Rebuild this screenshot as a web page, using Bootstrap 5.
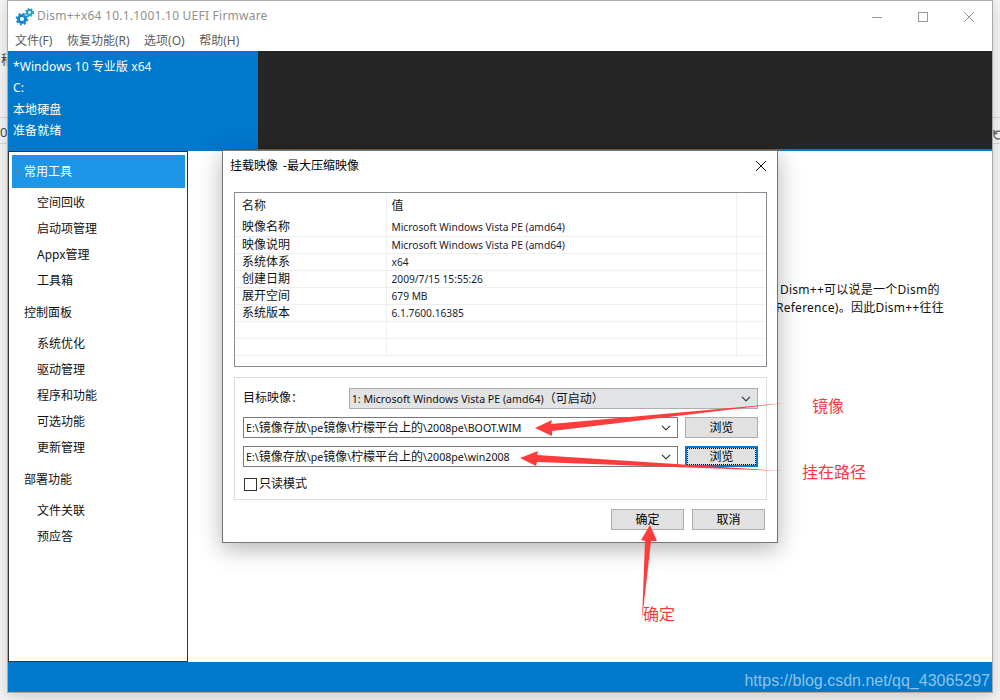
<!DOCTYPE html>
<html lang="zh-CN">
<head>
  <meta charset="UTF-8">
  <title>Dism++x64</title>
  <link href="https://cdn.jsdelivr.net/npm/bootstrap@5.3.0/dist/css/bootstrap.min.css" rel="stylesheet">
  <style>
    body { background: #f4f4f4; font: 12px/1.2 "Noto Sans", "Noto Sans CJK SC", sans-serif; color: #111; overflow: hidden; height: 700px; position: relative; }
    /* bits of the page behind the window */
    .back-rule { position: absolute; height: 1px; background: #d8d8d8; width: 1000px; left: 0; }
    .back-char { position: absolute; font-size: 13px; color: #444; width: 7px; overflow: hidden; white-space: nowrap; }
    .back-icon { position: absolute; left: 993px; top: 129px; }
    .app-win { position: absolute; left: 8px; top: 1px; width: 984px; height: 691px; background: #fff; box-shadow: 0 0 0 1px #ababab, 0 4px 14px rgba(0,0,0,.18); }
    .win-title { height: 31px; padding-left: 7px; color: #8f8f8f; letter-spacing: .23px; }
    .win-btn { width: 46px; }
    .win-menu { height: 19px; padding-left: 7px; color: #5c5c5c; gap: 14.5px; }
    .head-band { height: 98px; background: #262626; }
    .head-info { width: 250px; background: #0078cc; color: #fff; padding: 5px 0 0 5px; line-height: 21.3px; letter-spacing: .08px; }
    .blue-rule { height: 2px; background: #0078cc; }
    .side-list { width: 180px; border: 1px solid #333; padding: 3px 2px 0 3px; }
    .side-on { height: 33px; background: #1e96e8; color: #fff; padding: 1px 0 0 12px; display: flex; align-items: center; }
    .side-head { padding-left: 12px; height: 16px; line-height: 16px; margin-top: 16px; margin-bottom: 15px; }
    .side-item { padding-left: 25px; height: 16px; line-height: 16px; margin-bottom: 10px; }
    .side-on + .side-item { margin-top: 7px; }
    .pane-text { padding: 130px 0 0 592px; line-height: 18px; white-space: nowrap; letter-spacing: .25px; }
    .pane-text .cut { margin-left: -4px; }
    .foot-band { height: 30px; background: #0078cc; }
    .mark-url { position: absolute; right: 2px; bottom: 2px; font: 16px "Liberation Sans", sans-serif; color: #8fc4e8; letter-spacing: 0; }

    .dlg { position: absolute; left: 222px; top: 150px; width: 556px; height: 393px; background: #fff; border: 1px solid #777; box-shadow: 0 6px 22px rgba(0,0,0,.3); }
    .dlg-title { height: 30px; padding: 0 10px 0 7px; color: #000; word-spacing: 2px; }
    .prop-box { margin: 11px 10px 0 11px; height: 175px; border: 1px solid #8a8a94; overflow: hidden; }
    .prop-table { margin: 0; width: 100%; table-layout: fixed; font-size: 12px; }
    .prop-table th, .prop-table td { padding: 0 0 0 7px; height: 17px; line-height: 16px; border: 0; border-bottom: 1px solid #efefef; border-right: 1px solid #efefef; font-weight: 400; background: none; box-shadow: none; color: #111; white-space: nowrap; overflow: hidden; vertical-align: middle; }
    .prop-table th { height: 26px; border-bottom: 0; color: #222; }
    .prop-table th:nth-child(2) { padding-left: 5px; }
    .prop-table td:nth-child(2) { font-size: 10.2px; color: #1c1c2c; padding-left: 5px; }
    .prop-table td:last-child, .prop-table th:last-child { border-right: 0; }
    .grp-box { margin: 10px 10px 0 11px; height: 123px; border: 1px solid #dcdcdc; padding: 10px 8px 0 8px; }
    .grp-label { width: 106px; }
    .dlg .form-select { height: 21px; padding: 0 24px 0 2px; font-size: 12px; border-radius: 0; border: 1px solid #7a7a7a; color: #111; line-height: 19px; background-position: right 4px center; background-size: 14px 10px; box-shadow: none; white-space: nowrap; }
    .dlg .form-select span { font-size: 10.6px; }
    .pick-img { width: 410px; background-color: #e2e3e5; border-color: #adadad !important; }
    .pick-path { width: 436px; }
    .dlg .btn { border-radius: 0; background: #e1e1e1; border: 1px solid #adadad; color: #000; font-size: 12px; padding: 0; width: 73px; height: 21px; line-height: 18px; }
    .btn.btn-focus { border: 2px solid #0078d7; outline: 1px dotted #000; outline-offset: -3px; }
    .dlg .form-check-input { width: 13px; height: 13px; margin: 0 2px 0 1px; border: 1px solid #333; border-radius: 0; float: none; }
    .read-row { padding-top: 2px; }
    .dlg-foot { padding: 9px 12px 0 0; gap: 8px; }
    .draw-over { position: absolute; left: 0; top: 0; pointer-events: none; }
    .note { position: absolute; color: #f33d3d; font-size: 16px; line-height: 20px; }
  </style>
</head>
<body>
  <div class="back-rule" style="top:117px"></div>
  <div class="back-rule" style="top:143px"></div>
  <span class="back-char" style="left:1px;top:52px">稍</span>
  <span class="back-char" style="left:0;top:125px">0</span>
  <svg class="back-icon" width="7" height="12" viewBox="0 0 7 12"><path d="M7 2.5A4 4 0 1 0 7 9.5M1 1V4.5H4.5" fill="none" stroke="#666" stroke-width="1.4"/></svg>

  <!-- Fenêtre principale -->
  <div class="app-win d-flex flex-column">
    <div class="win-title d-flex align-items-center">
      <svg width="20" height="20" viewBox="0 0 20 20" class="flex-shrink-0" style="margin-right:2px">
        <circle cx="7" cy="12" r="3.6" fill="none" stroke="#1487d2" stroke-width="3"/>
        <circle cx="7" cy="12" r="5.6" fill="none" stroke="#1487d2" stroke-width="1.6" stroke-dasharray="2 2.4"/>
        <circle cx="14.5" cy="5.5" r="2.4" fill="none" stroke="#19a0c8" stroke-width="2"/>
        <circle cx="14.5" cy="5.5" r="3.9" fill="none" stroke="#19a0c8" stroke-width="1.4" stroke-dasharray="1.6 1.6"/>
      </svg>
      <span class="flex-grow-1">Dism++x64 10.1.1001.10 UEFI Firmware</span>
      <div class="d-flex align-items-center">
        <div class="win-btn text-center"><svg width="10" height="10"><path d="M0 5.5H10" stroke="#999"/></svg></div>
        <div class="win-btn text-center"><svg width="10" height="10"><rect x=".5" y=".5" width="9" height="9" fill="none" stroke="#999"/></svg></div>
        <div class="win-btn text-center"><svg width="10" height="10"><path d="M0 0L10 10M10 0L0 10" stroke="#999"/></svg></div>
      </div>
    </div>
    <div class="win-menu d-flex align-items-center">
      <span>文件(F)</span><span>恢复功能(R)</span><span>选项(O)</span><span>帮助(H)</span>
    </div>
    <div class="head-band d-flex">
      <div class="head-info">*Windows 10 专业版 x64<br>C:<br>本地硬盘<br>准备就绪</div>
    </div>
    <div class="blue-rule"></div>
    <div class="d-flex flex-grow-1">
      <div class="side-list flex-shrink-0">
        <div class="side-on">常用工具</div>
        <div class="side-item">空间回收</div>
        <div class="side-item">启动项管理</div>
        <div class="side-item">Appx管理</div>
        <div class="side-item">工具箱</div>
        <div class="side-head">控制面板</div>
        <div class="side-item">系统优化</div>
        <div class="side-item">驱动管理</div>
        <div class="side-item">程序和功能</div>
        <div class="side-item">可选功能</div>
        <div class="side-item">更新管理</div>
        <div class="side-head">部署功能</div>
        <div class="side-item">文件关联</div>
        <div class="side-item">预应答</div>
      </div>
      <div class="pane-text flex-grow-1">Dism++可以说是一个Dism的<br><span class="cut">Reference)。因此Dism++往往</span></div>
    </div>
    <div class="foot-band position-relative"><span class="mark-url">https://blog.csdn.net/qq_43065297</span></div>
  </div>

  <!-- Boîte de dialogue -->
  <div class="dlg">
    <div class="dlg-title d-flex align-items-center justify-content-between">
      <span>挂载映像 -最大压缩映像</span>
      <svg width="12" height="12"><path d="M1 1L11 11M11 1L1 11" stroke="#111"/></svg>
    </div>
    <div class="prop-box">
      <table class="table prop-table">
        <colgroup><col style="width:151px"><col style="width:350px"><col></colgroup>
        <thead><tr><th>名称</th><th>值</th><th></th></tr></thead>
        <tbody>
          <tr><td>映像名称</td><td>Microsoft Windows Vista PE (amd64)</td><td></td></tr>
          <tr><td>映像说明</td><td>Microsoft Windows Vista PE (amd64)</td><td></td></tr>
          <tr><td>系统体系</td><td>x64</td><td></td></tr>
          <tr><td>创建日期</td><td>2009/7/15 15:55:26</td><td></td></tr>
          <tr><td>展开空间</td><td>679 MB</td><td></td></tr>
          <tr><td>系统版本</td><td>6.1.7600.16385</td><td></td></tr>
          <tr><td></td><td></td><td></td></tr>
          <tr><td></td><td></td><td></td></tr>
        </tbody>
      </table>
    </div>
    <div class="grp-box">
      <div class="d-flex align-items-center mb-2">
        <span class="grp-label">目标映像：</span>
        <div class="form-select pick-img"><span>1: Microsoft Windows Vista PE (amd64)</span>（可启动）</div>
      </div>
      <div class="d-flex align-items-center mb-2" style="gap:7px">
        <div class="form-select pick-path"><span>E:\</span>镜像存放<span>\pe</span>镜像<span>\</span>柠檬平台上的<span>\2008pe\BOOT.WIM</span></div>
        <button class="btn" type="button">浏览</button>
      </div>
      <div class="d-flex align-items-center mb-2" style="gap:7px">
        <div class="form-select pick-path"><span>E:\</span>镜像存放<span>\pe</span>镜像<span>\</span>柠檬平台上的<span>\2008pe\win2008</span></div>
        <button class="btn btn-focus" type="button">浏览</button>
      </div>
      <div class="d-flex align-items-center read-row"><input class="form-check-input" type="checkbox"><span>只读模式</span></div>
    </div>
    <div class="dlg-foot d-flex justify-content-end">
      <button class="btn" type="button">确定</button>
      <button class="btn" type="button">取消</button>
    </div>
  </div>

  <!-- Annotations rouges -->
  <svg class="draw-over" width="1000" height="700">
    <g fill="#ff3b3b">
      <path d="M535 428L552 420L551 424L785 403L552 431L552 436Z"/>
      <path d="M520 458L538 451L537 455L783 471L537 462L536 466Z"/>
      <path d="M650 525L657 541L651 541L642 620L645 541L641 540Z"/>
    </g>
  </svg>
  <span class="note" style="left:812px;top:396px">镜像</span>
  <span class="note" style="left:802px;top:462px">挂在路径</span>
  <span class="note" style="left:643px;top:604px">确定</span>

  <script src="https://cdn.jsdelivr.net/npm/bootstrap@5.3.0/dist/js/bootstrap.bundle.min.js"></script>
</body>
</html>
